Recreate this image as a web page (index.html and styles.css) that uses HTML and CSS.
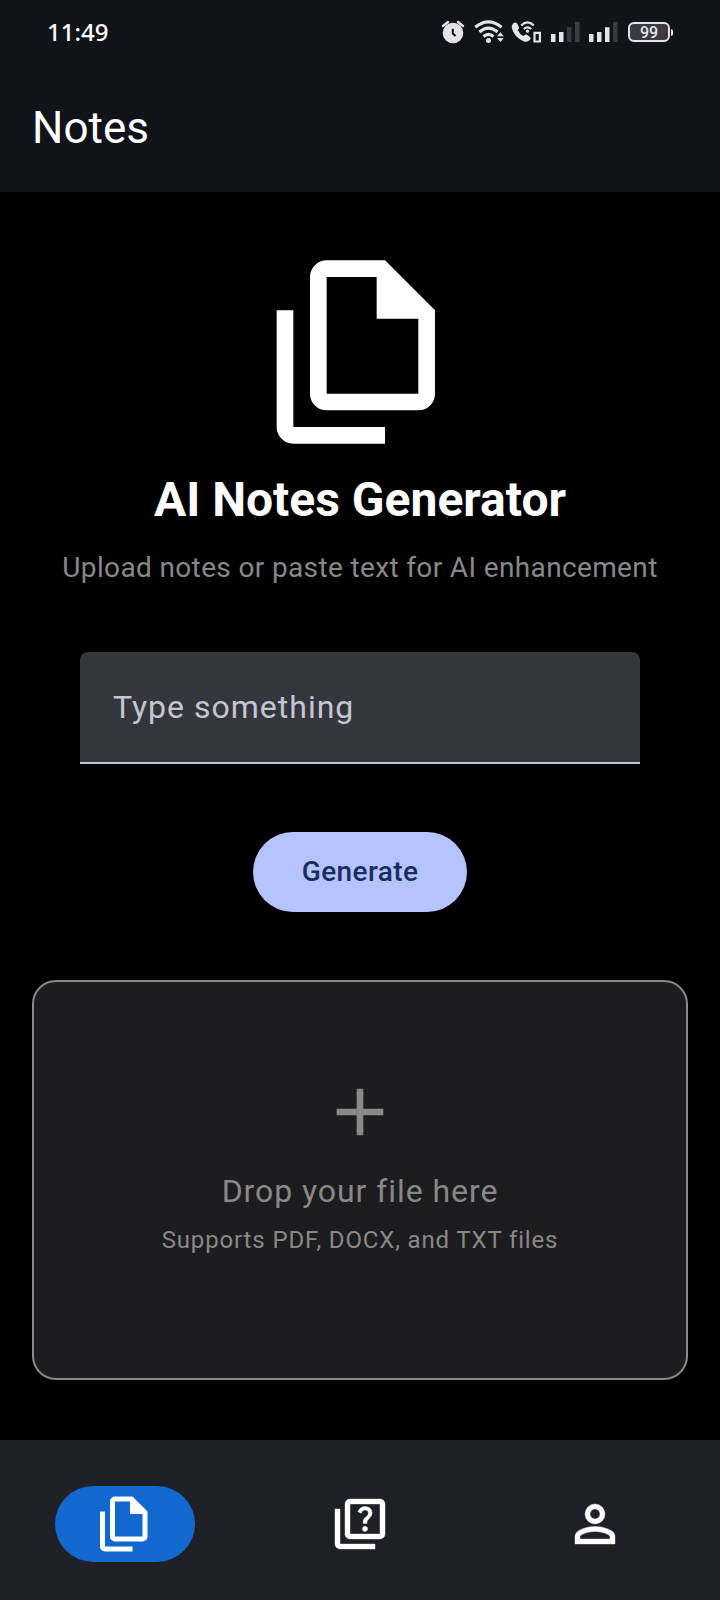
FILE: index.html
```html
<!DOCTYPE html>
<html lang="en">
<head>
<meta charset="utf-8">
<title>Notes</title>
<link rel="stylesheet" href="styles.css">
</head>
<body>
<div class="app">
  <header class="header">
    <div class="status">
      <span class="time">11:49</span>
      <div class="status-icons">
        <svg class="alarm" width="24" height="24" viewBox="0 0 24 24">
          <circle cx="12" cy="13" r="10.300" fill="#e4e4e6"/>
          <path d="M2 6L7 2M22 6L17 2" stroke="#e4e4e6" stroke-width="2.400" stroke-linecap="round"/>
          <path d="M11.800 8.800V13.500L14.600 16" fill="none" stroke="#11131a" stroke-width="2"/>
        </svg>
        <svg class="wifi" width="30" height="24" viewBox="0 0 30 24">
          <g fill="none" stroke="#e4e4e6" stroke-width="3.100">
            <path d="M1.300 7.200Q14.500-3.600 27.500 7.200"/>
            <path d="M5.400 12Q14.500 4.300 23.500 12"/>
            <path d="M9.500 16.500Q14.500 12.300 19.500 16.500"/>
          </g>
          <circle cx="14.500" cy="20.500" r="2.500" fill="#e4e4e6"/>
          <path d="M23 16.200L26.400 12.200L29.800 16.200ZM23 18H29.800L26.400 22Z" fill="#e4e4e6"/>
        </svg>
        <svg class="call" width="32" height="24" viewBox="0 0 32 24">
          <path d="M2 3.500Q4 1.600 5.800 3L8 7Q8.700 8.500 6.800 10Q8.500 14 12.300 16Q14.300 13.800 16 14.800L19 17Q20.500 18.300 18.800 20Q16.500 22.700 12.800 21.400Q3 17 1 8.500Q.5 5 2 3.500Z" fill="#e4e4e6"/>
          <path d="M10.200 5.500Q16.500-.8 22.800 5.500M12.800 9Q16.500 5.700 20.200 9" fill="none" stroke="#e4e4e6" stroke-width="2.200"/>
          <circle cx="16.500" cy="11.200" r="1.600" fill="#e4e4e6"/>
          <path d="M23.500 12.800H28.900V21.500H23.500Z" fill="none" stroke="#e4e4e6" stroke-width="2.200"/>
        </svg>
        <svg class="signal" width="30" height="20" viewBox="0 0 30 20">
          <path d="M0 12H4.500V20H0ZM8 10H12.500V20H8Z" fill="#e4e4e6"/>
          <path d="M16 5.300H20.500V20H16ZM24 0H28.500V20H24Z" fill="#3a3a42"/>
        </svg>
        <svg class="signal" width="30" height="20" viewBox="0 0 30 20">
          <path d="M0 12H4.500V20H0ZM8 10H12.500V20H8ZM16 5.300H20.500V20H16Z" fill="#e4e4e6"/>
          <path d="M24 0H28.500V20H24Z" fill="#3a3a42"/>
        </svg>
        <div class="battery">99</div>
      </div>
    </div>
    <h1 class="page-title">Notes</h1>
  </header>

  <main class="content">
    <svg class="hero-icon" viewBox="0 -960 960 960" fill="#fff"><path d="M760-200H320q-33 0-56.500-23.500T240-280v-560q0-33 23.500-56.500T320-920h280l240 240v400q0 33-23.500 56.500T760-200ZM560-640v-200H320v560h440v-360H560ZM160-40q-33 0-56.500-23.500T80-120v-560h80v560h440v80H160Z"/></svg>
    <h2 class="hero-title">AI Notes Generator</h2>
    <p class="hero-sub">Upload notes or paste text for AI enhancement</p>
    <div class="field">Type something</div>
    <button class="generate">Generate</button>
    <section class="drop">
      <svg class="plus" viewBox="0 -960 960 960" fill="#888"><path d="M440-440H200v-80h240v-240h80v240h240v80H520v240h-80v-240Z"/></svg>
      <p class="drop-title">Drop your file here</p>
      <p class="drop-sub">Supports PDF, DOCX, and TXT files</p>
    </section>
  </main>

  <nav class="nav">
    <a class="nav-item active"><svg viewBox="0 -960 960 960" fill="#fff"><path d="M760-200H320q-33 0-56.500-23.500T240-280v-560q0-33 23.500-56.500T320-920h280l240 240v400q0 33-23.500 56.500T760-200ZM560-640v-200H320v560h440v-360H560ZM160-40q-33 0-56.500-23.500T80-120v-560h80v560h440v80H160Z"/></svg></a>
    <a class="nav-item"><svg viewBox="0 -960 960 960" fill="#fff" stroke="#fff" stroke-width="6"><path d="M560-360q17 0 29.500-12.500T602-402q0-17-12.500-29.500T560-444q-17 0-29.500 12.500T518-402q0 17 12.500 29.500T560-360Zm-30-128h60q0-29 6-42.500t28-35.500q30-30 40-48.500t10-43.500q0-45-31.500-73.500T560-760q-41 0-71.500 23T446-676l54 22q9-25 24.500-37.500T560-704q24 0 39 13.500t15 36.500q0 14-8 26.500T578-596q-33 29-40.500 45.500T530-488ZM320-240q-33 0-56.500-23.500T240-320v-480q0-33 23.500-56.500T320-880h480q33 0 56.500 23.500T880-800v480q0 33-23.500 56.500T800-240H320Zm0-80h480v-480H320v480ZM160-80q-33 0-56.500-23.500T80-160v-560h80v560h560v80H160Z"/></svg></a>
    <a class="nav-item"><svg viewBox="0 -960 960 960" fill="#fff" stroke="#fff" stroke-width="6"><path d="M480-480q-66 0-113-47t-47-113q0-66 47-113t113-47q66 0 113 47t47 113q0 66-47 113t-113 47ZM160-160v-112q0-34 17.500-62.500T224-378q62-31 126-46.500T480-440q66 0 130 15.500T736-378q29 15 46.500 43.500T800-272v112H160Zm80-80h480v-32q0-11-5.500-20T700-306q-54-27-109-40.500T480-360q-56 0-111 13.500T260-306q-9 5-14.500 14t-5.500 20v32Zm240-320q33 0 56.500-23.500T560-640q0-33-23.500-56.500T480-720q-33 0-56.500 23.500T400-640q0 33 23.500 56.500T480-560Z"/></svg></a>
  </nav>
</div>
</body>
</html>
```
FILE: styles.css
```css
* { box-sizing: border-box; }
body { margin: 0; background: #000; font-family: Roboto, sans-serif; }
h1, h2, p { margin: 0; font-weight: 400; white-space: nowrap; }
svg { display: block; flex: none; }
.app { width: 720px; height: 1600px; display: flex; flex-direction: column; }

.header { height: 192px; background: #11131a; }
.status { height: 64px; padding: 0 47px; display: flex; align-items: center; justify-content: space-between; }
.time { color: #fff; font-family: "Noto Sans", sans-serif; font-size: 24px; font-weight: 500; line-height: 32px; }
.status-icons { display: flex; align-items: center; }
.wifi { margin-left: 9px; }
.call { margin-left: 7px; }
.signal { margin-left: 8px; }
.battery {
  position: relative;
  width: 42px; height: 20px; margin: 0 3px 0 9px;
  border: 2px solid #e4e4e6; border-radius: 6px; background: #3a3a42;
  color: #e4e4e6; font-size: 16px; font-weight: 500; line-height: 17px; text-align: center;
}
.battery::after {
  content: ""; position: absolute; right: -5px; top: 5px;
  width: 2px; height: 7px; border-radius: 0 2px 2px 0; background: #e4e4e6;
}
.page-title { padding: 0 32px; color: #fff; font-size: 44px; line-height: 56px; margin-top: 36px; }

.content { height: 1248px; padding-top: 60px; display: flex; flex-direction: column; align-items: center; }
.hero-icon { width: 200px; height: 200px; }
.hero-title { margin-top: 16px; color: #fff; font-size: 48px; font-weight: 700; line-height: 64px; }
.hero-sub { margin-top: 16px; color: #888; font-size: 28px; line-height: 40px; letter-spacing: .36px; }
.field {
  width: 560px; height: 112px; margin-top: 64px; padding: 0 33px;
  background: #34363e; border-bottom: 2px solid #c6c6d0; border-radius: 8px 8px 0 0;
  color: #c6c6d0; font-size: 32px; line-height: 110px; letter-spacing: 1px;
}
.generate {
  width: 214px; height: 80px; margin-top: 68px; padding: 0 0 2px;
  border: 0; border-radius: 40px; background: #b3c4ff; color: #1b2d60;
  font-family: inherit; font-size: 28px; font-weight: 500; letter-spacing: .4px;
}
.drop {
  width: 656px; height: 400px; margin-top: 68px; padding-top: 90px;
  display: flex; flex-direction: column; align-items: center;
  border: 2px solid #888; border-radius: 24px; background: #1c1c1e; color: #888;
}
.plus { width: 80px; height: 80px; }
.drop-title { margin-top: 15px; font-size: 32px; line-height: 48px; letter-spacing: .93px; }
.drop-sub { margin-top: 9px; font-size: 24px; line-height: 32px; letter-spacing: .86px; }

.nav { height: 160px; padding: 46px 55px 0; display: flex; justify-content: space-between; background: #1f2027; }
.nav-item { width: 140px; height: 76px; border-radius: 38px; display: flex; align-items: center; justify-content: center; }
.nav-item svg { width: 60px; height: 60px; }
.nav-item.active { background: #1368cf; }
```
